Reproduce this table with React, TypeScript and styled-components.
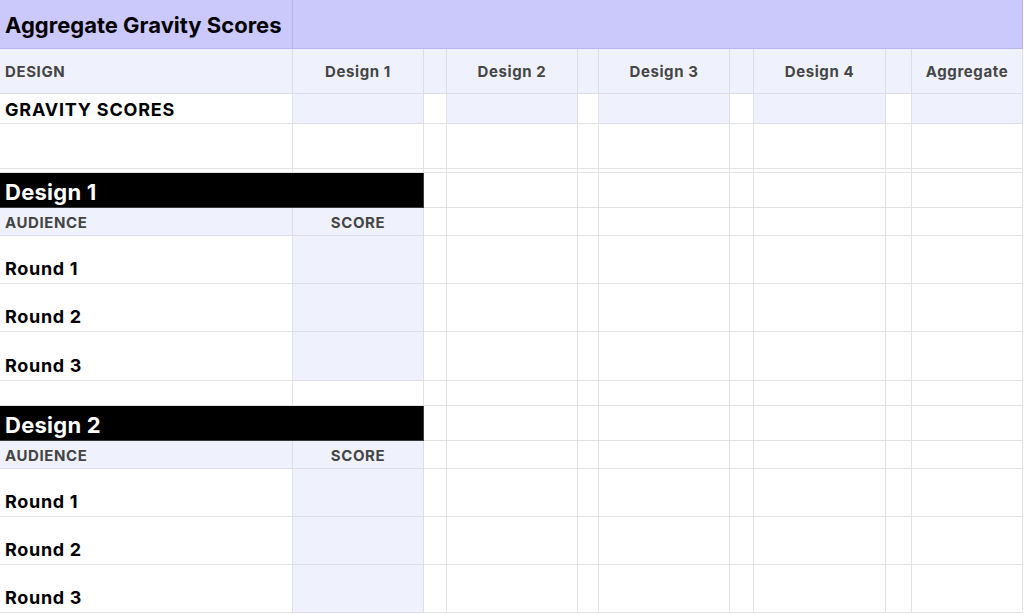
import styled, { createGlobalStyle, css } from 'styled-components';

const GlobalStyle = createGlobalStyle`
	html, body {
		margin: 0;
		padding: 0;
		background: #ffffff;
		overflow: hidden;
	}
	body {
		font-family: 'Inter', 'Liberation Sans', sans-serif;
	}
`;

type Tone = 'white' | 'lav' | 'title' | 'band';
type Kind = 'title' | 'head' | 'label' | 'round' | 'band' | 'sub';

const COLS = [293, 131, 23, 131, 21, 131, 24, 132, 26, 111];
const ROWS = [49, 45, 30, 45, 4, 35, 28, 48, 48, 49, 25, 35, 28, 48, 48, 48];

type CellDef = {
	tone: Tone;
	text?: string;
	kind?: Kind;
	span?: number;
	center?: boolean;
};

const designs = ['Design 1', 'Design 2', 'Design 3', 'Design 4'];

const restWhite = (n: number): CellDef[] => Array.from({ length: n }, () => ({ tone: 'white' as Tone }));

const headerRow: CellDef[] = [
	{ tone: 'lav', text: 'DESIGN', kind: 'head' },
	...designs.flatMap((d) => [
		{ tone: 'lav' as Tone, text: d, kind: 'head' as Kind, center: true },
		{ tone: 'lav' as Tone },
	]),
	{ tone: 'lav', text: 'Aggregate', kind: 'head', center: true },
];

const scoreRow: CellDef[] = [
	{ tone: 'white', text: 'GRAVITY SCORES', kind: 'label' },
	...designs.flatMap(() => [{ tone: 'lav' as Tone }, { tone: 'white' as Tone }]),
	{ tone: 'lav' },
];

const designBlock = (name: string): CellDef[][] => [
	[{ tone: 'band', text: name, kind: 'band', span: 2 }, ...restWhite(8)],
	[
		{ tone: 'lav', text: 'AUDIENCE', kind: 'sub' },
		{ tone: 'lav', text: 'SCORE', kind: 'sub', center: true },
		...restWhite(8),
	],
	...[1, 2, 3].map((n) => [
		{ tone: 'white' as Tone, text: `Round ${n}`, kind: 'round' as Kind },
		{ tone: 'lav' as Tone },
		...restWhite(8),
	]),
];

const rows: CellDef[][] = [
	[
		{ tone: 'title', text: 'Aggregate Gravity Scores', kind: 'title' },
		{ tone: 'title', span: 9 },
	],
	headerRow,
	scoreRow,
	restWhite(10),
	restWhite(10),
	...designBlock('Design 1'),
	restWhite(10),
	...designBlock('Design 2'),
];

const toneStyles = {
	white: css`
		background: #ffffff;
		border-color: #e2e2e2;
	`,
	lav: css`
		background: #eff2fd;
		border-color: #dcdcec;
	`,
	title: css`
		background: #cbc8fc;
		border-color: #b8b3f1;
	`,
	band: css`
		background: #000000;
		border-color: #3a3a3a;
	`,
};

const kindStyles = {
	title: css`
		font-size: 22px;
		font-weight: 700;
		color: #000000;
		align-items: center;
		padding-top: 2px;
	`,
	head: css`
		font-size: 15px;
		font-weight: 700;
		letter-spacing: 0.6px;
		color: #454545;
		align-items: center;
	`,
	label: css`
		font-size: 18px;
		font-weight: 700;
		letter-spacing: 0.8px;
		color: #000000;
		align-items: flex-end;
		padding-bottom: 4px;
	`,
	round: css`
		font-size: 18px;
		font-weight: 700;
		letter-spacing: 0.7px;
		color: #000000;
		align-items: flex-end;
		padding-bottom: 5px;
	`,
	band: css`
		font-size: 22px;
		font-weight: 700;
		letter-spacing: 0.25px;
		color: #ffffff;
		align-items: flex-end;
		padding-bottom: 4px;
	`,
	sub: css`
		font-size: 15px;
		font-weight: 700;
		letter-spacing: 0.6px;
		color: #454545;
		align-items: flex-end;
		padding-bottom: 5px;
	`,
};

const Sheet = styled.div`
	display: grid;
	grid-template-columns: ${COLS.map((c) => `${c}px`).join(' ')};
	grid-template-rows: ${ROWS.map((r) => `${r}px`).join(' ')};
	width: 1024px;
	height: 615px;
	overflow: hidden;
`;

const Cell = styled.div<{ $tone: Tone; $kind?: Kind; $span: number; $center?: boolean }>`
	box-sizing: border-box;
	grid-column: span ${(p) => p.$span};
	display: flex;
	justify-content: ${(p) => (p.$center ? 'center' : 'flex-start')};
	padding-left: ${(p) => (p.$center ? '0' : '5px')};
	border-right: 1px solid;
	border-bottom: 1px solid;
	white-space: nowrap;
	overflow: hidden;
	line-height: 1;
	${(p) => toneStyles[p.$tone]}
	${(p) => p.$kind && kindStyles[p.$kind]}
`;

export default function App() {
	return (
		<>
			<GlobalStyle />
			<Sheet>
				{rows.flatMap((row, r) =>
					row.map((c, i) => (
						<Cell
							key={`${r}-${i}`}
							$tone={c.tone}
							$kind={c.kind}
							$span={c.span ?? 1}
							$center={c.center}
						>
							{c.text}
						</Cell>
					))
				)}
			</Sheet>
		</>
	);
}
